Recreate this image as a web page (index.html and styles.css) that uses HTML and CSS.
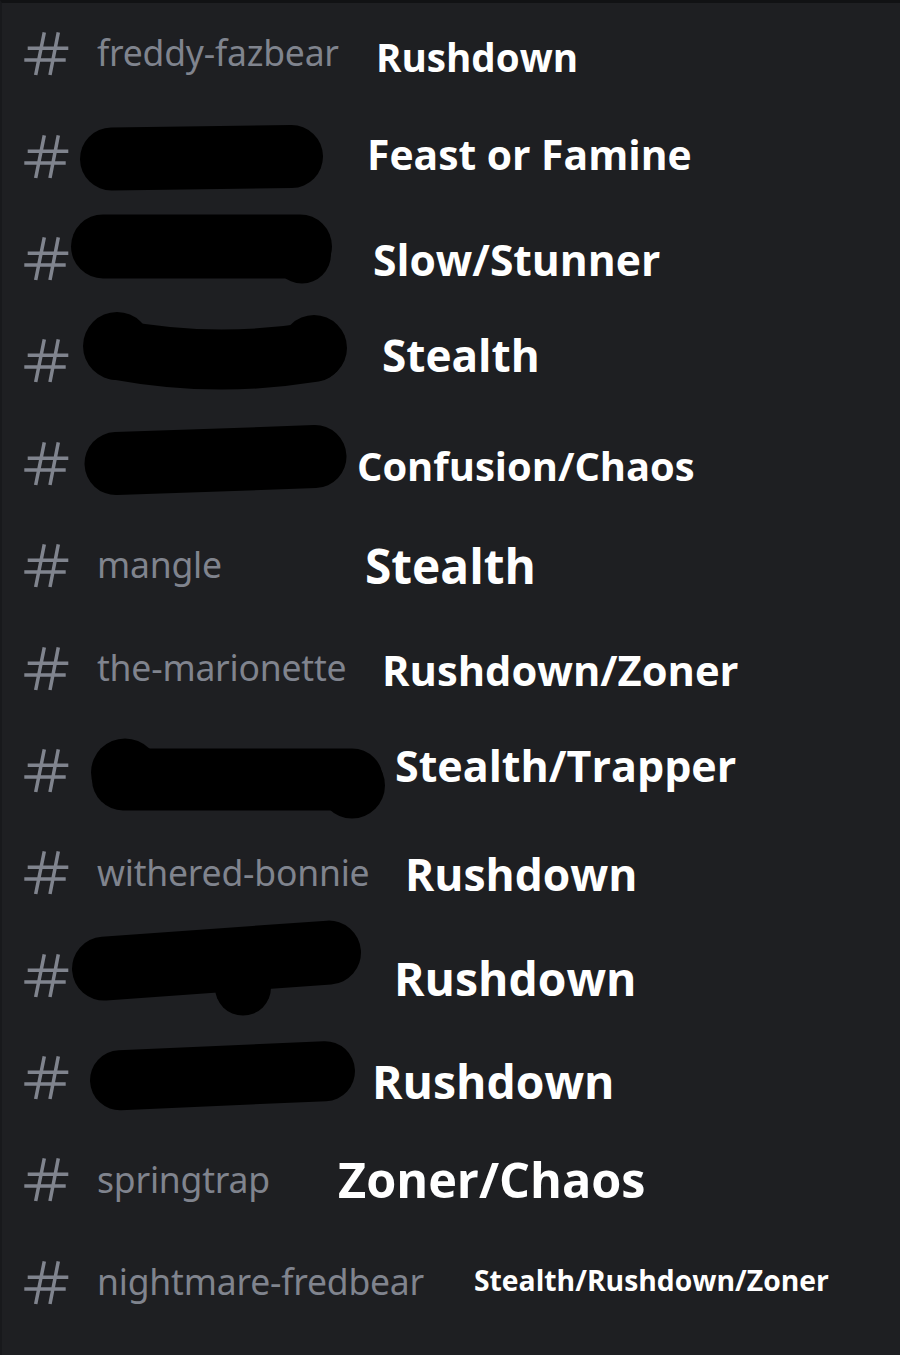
FILE: index.html
```html
<!DOCTYPE html>
<html lang="en">
<head>
<meta charset="utf-8">
<title>Channels</title>
<link rel="stylesheet" href="styles.css">
</head>
<body>
<main class="list">
  <div class="row r1">
    <svg class="hash" viewBox="0 0 48 48"><path d="M22.3 2.3 13.7 45M36.3 2.3 28 45M5.7 18.3H46.3M2.3 30H43.7"/></svg>
    <div class="chan"><span class="name">freddy-fazbear</span></div>
    <span class="tag">Rushdown</span>
  </div>
  <div class="row r2">
    <svg class="hash" viewBox="0 0 48 48"><path d="M22.3 2.3 13.7 45M36.3 2.3 28 45M5.7 18.3H46.3M2.3 30H43.7"/></svg>
    <div class="chan"><svg class="blob" viewBox="0 0 400 102.4"><path class="ink" d="M41.5 54 L221.5 51.5"/></svg></div>
    <span class="tag">Feast or Famine</span>
  </div>
  <div class="row r3">
    <svg class="hash" viewBox="0 0 48 48"><path d="M22.3 2.3 13.7 45M36.3 2.3 28 45M5.7 18.3H46.3M2.3 30H43.7"/></svg>
    <div class="chan"><svg class="blob" viewBox="0 0 400 102.4"><path class="ink w64" d="M33 38.4 L230 38.4"/><circle cx="232" cy="46.4" r="29"/></svg></div>
    <span class="tag">Slow/Stunner</span>
  </div>
  <div class="row r4">
    <svg class="hash" viewBox="0 0 48 48"><path d="M22.3 2.3 13.7 45M36.3 2.3 28 45M5.7 18.3H46.3M2.3 30H43.7"/></svg>
    <div class="chan"><svg class="blob" viewBox="0 0 400 102.4"><path class="ink w60" d="M48 40 Q145 58 244 42"/><circle cx="47" cy="36" r="34"/><circle cx="244" cy="38" r="33"/></svg></div>
    <span class="tag">Stealth</span>
  </div>
  <div class="row r5">
    <svg class="hash" viewBox="0 0 48 48"><path d="M22.3 2.3 13.7 45M36.3 2.3 28 45M5.7 18.3H46.3M2.3 30H43.7"/></svg>
    <div class="chan"><svg class="blob" viewBox="0 0 400 102.4"><path class="ink" d="M46 50.6 L245 43.6"/></svg></div>
    <span class="tag">Confusion/Chaos</span>
  </div>
  <div class="row r6">
    <svg class="hash" viewBox="0 0 48 48"><path d="M22.3 2.3 13.7 45M36.3 2.3 28 45M5.7 18.3H46.3M2.3 30H43.7"/></svg>
    <div class="chan"><span class="name">mangle</span></div>
    <span class="tag">Stealth</span>
  </div>
  <div class="row r7">
    <svg class="hash" viewBox="0 0 48 48"><path d="M22.3 2.3 13.7 45M36.3 2.3 28 45M5.7 18.3H46.3M2.3 30H43.7"/></svg>
    <div class="chan"><span class="name">the-marionette</span></div>
    <span class="tag">Rushdown/Zoner</span>
  </div>
  <div class="row r8">
    <svg class="hash" viewBox="0 0 48 48"><path d="M22.3 2.3 13.7 45M36.3 2.3 28 45M5.7 18.3H46.3M2.3 30H43.7"/></svg>
    <div class="chan"><svg class="blob" viewBox="0 0 400 102.4"><path class="ink w62" d="M53 59.4 L282 59.4"/><circle cx="55" cy="52.4" r="34"/><circle cx="282" cy="65.4" r="33"/></svg></div>
    <span class="tag">Stealth/Trapper</span>
  </div>
  <div class="row r9">
    <svg class="hash" viewBox="0 0 48 48"><path d="M22.3 2.3 13.7 45M36.3 2.3 28 45M5.7 18.3H46.3M2.3 30H43.7"/></svg>
    <div class="chan"><span class="name">withered-bonnie</span></div>
    <span class="tag">Rushdown</span>
  </div>
  <div class="row r10">
    <svg class="hash" viewBox="0 0 48 48"><path d="M22.3 2.3 13.7 45M36.3 2.3 28 45M5.7 18.3H46.3M2.3 30H43.7"/></svg>
    <div class="chan"><svg class="blob" viewBox="0 0 400 102.4"><path class="ink w64" d="M34 43.6 L259 27.6"/><circle cx="173" cy="62.6" r="28"/></svg></div>
    <span class="tag">Rushdown</span>
  </div>
  <div class="row r11">
    <svg class="hash" viewBox="0 0 48 48"><path d="M22.3 2.3 13.7 45M36.3 2.3 28 45M5.7 18.3H46.3M2.3 30H43.7"/></svg>
    <div class="chan"><svg class="blob" viewBox="0 0 400 102.4"><path class="ink w60" d="M50 53.2 L255 44.2"/></svg></div>
    <span class="tag">Rushdown</span>
  </div>
  <div class="row r12">
    <svg class="hash" viewBox="0 0 48 48"><path d="M22.3 2.3 13.7 45M36.3 2.3 28 45M5.7 18.3H46.3M2.3 30H43.7"/></svg>
    <div class="chan"><span class="name">springtrap</span></div>
    <span class="tag">Zoner/Chaos</span>
  </div>
  <div class="row r13">
    <svg class="hash" viewBox="0 0 48 48"><path d="M22.3 2.3 13.7 45M36.3 2.3 28 45M5.7 18.3H46.3M2.3 30H43.7"/></svg>
    <div class="chan"><span class="name">nightmare-fredbear</span></div>
    <span class="tag">Stealth/Rushdown/Zoner</span>
  </div>
</main>
</body>
</html>
```
FILE: styles.css
```css
html, body {
  margin: 0;
  padding: 0;
  background: #1e1f22;
}

.list {
  box-sizing: border-box;
  width: 900px;
  height: 1355px;
  border-top: 3px solid #111214;
  border-left: 2px solid #18191c;
  display: flex;
  flex-direction: column;
  overflow: hidden;
}

.row {
  height: 102.4px;
  flex: none;
  display: flex;
  align-items: center;
}

.hash {
  width: 48px;
  height: 48px;
  margin-left: 20px;
  flex: none;
}

.hash path {
  fill: none;
  stroke: #80848e;
  stroke-width: 3.5;
}

.chan {
  flex: none;
  align-self: stretch;
  display: flex;
  align-items: center;
}

.name {
  padding-left: 27px;
  font-family: "Noto Sans", "Open Sans", sans-serif;
  font-size: 35.5px;
  letter-spacing: -0.2px;
  line-height: 1;
  color: #80848e;
  white-space: nowrap;
  margin-top: -2px;
}

.blob {
  flex: none;
  width: 400px;
  height: 102.4px;
  display: block;
  overflow: visible;
}

.blob .ink {
  fill: none;
  stroke: #000;
  stroke-width: 63;
  stroke-linecap: round;
}

.blob .w60 { stroke-width: 60; }
.blob .w62 { stroke-width: 62; }
.blob .w64 { stroke-width: 64; }

.blob circle { fill: #000; }

.tag {
  flex: none;
  font-family: "Open Sans", "Noto Sans", sans-serif;
  font-weight: 700;
  line-height: 1;
  color: #ffffff;
  white-space: nowrap;
}

.r1 .chan { width: 306px; }
.r1 .tag { font-size: 38.6px; margin-top: 6px; }

.r2 .chan { width: 297px; }
.r2 .tag { font-size: 40.8px; margin-top: -4px; }

.r3 .chan { width: 303px; }
.r3 .tag { font-size: 42.6px; }

.r4 .chan { width: 312px; }
.r4 .tag { font-size: 44.1px; margin-top: -12px; }

.r5 .chan { width: 287px; }
.r5 .tag { font-size: 39.9px; margin-top: 4px; }

.r6 .chan { width: 295px; }
.r6 .tag { font-size: 47.8px; }

.r7 .chan { width: 312px; }
.r7 .tag { font-size: 41.7px; margin-top: 2px; }

.r8 .chan { width: 325px; }
.r8 .tag { font-size: 43px; margin-top: -10px; }

.r9 .chan { width: 335px; }
.r9 .tag { font-size: 44.4px; margin-top: 1px; }

.r10 .chan { width: 324px; }
.r10 .tag { font-size: 46.3px; margin-top: 7px; }

.r11 .chan { width: 302px; }
.r11 .tag { font-size: 46.3px; margin-top: 9px; }

.r12 .chan { width: 268px; }
.r12 .tag { font-size: 48.6px; margin-top: -2px; }

.r13 .chan { width: 404px; }
.r13 .tag { font-size: 28.3px; margin-top: -6px; }
```
